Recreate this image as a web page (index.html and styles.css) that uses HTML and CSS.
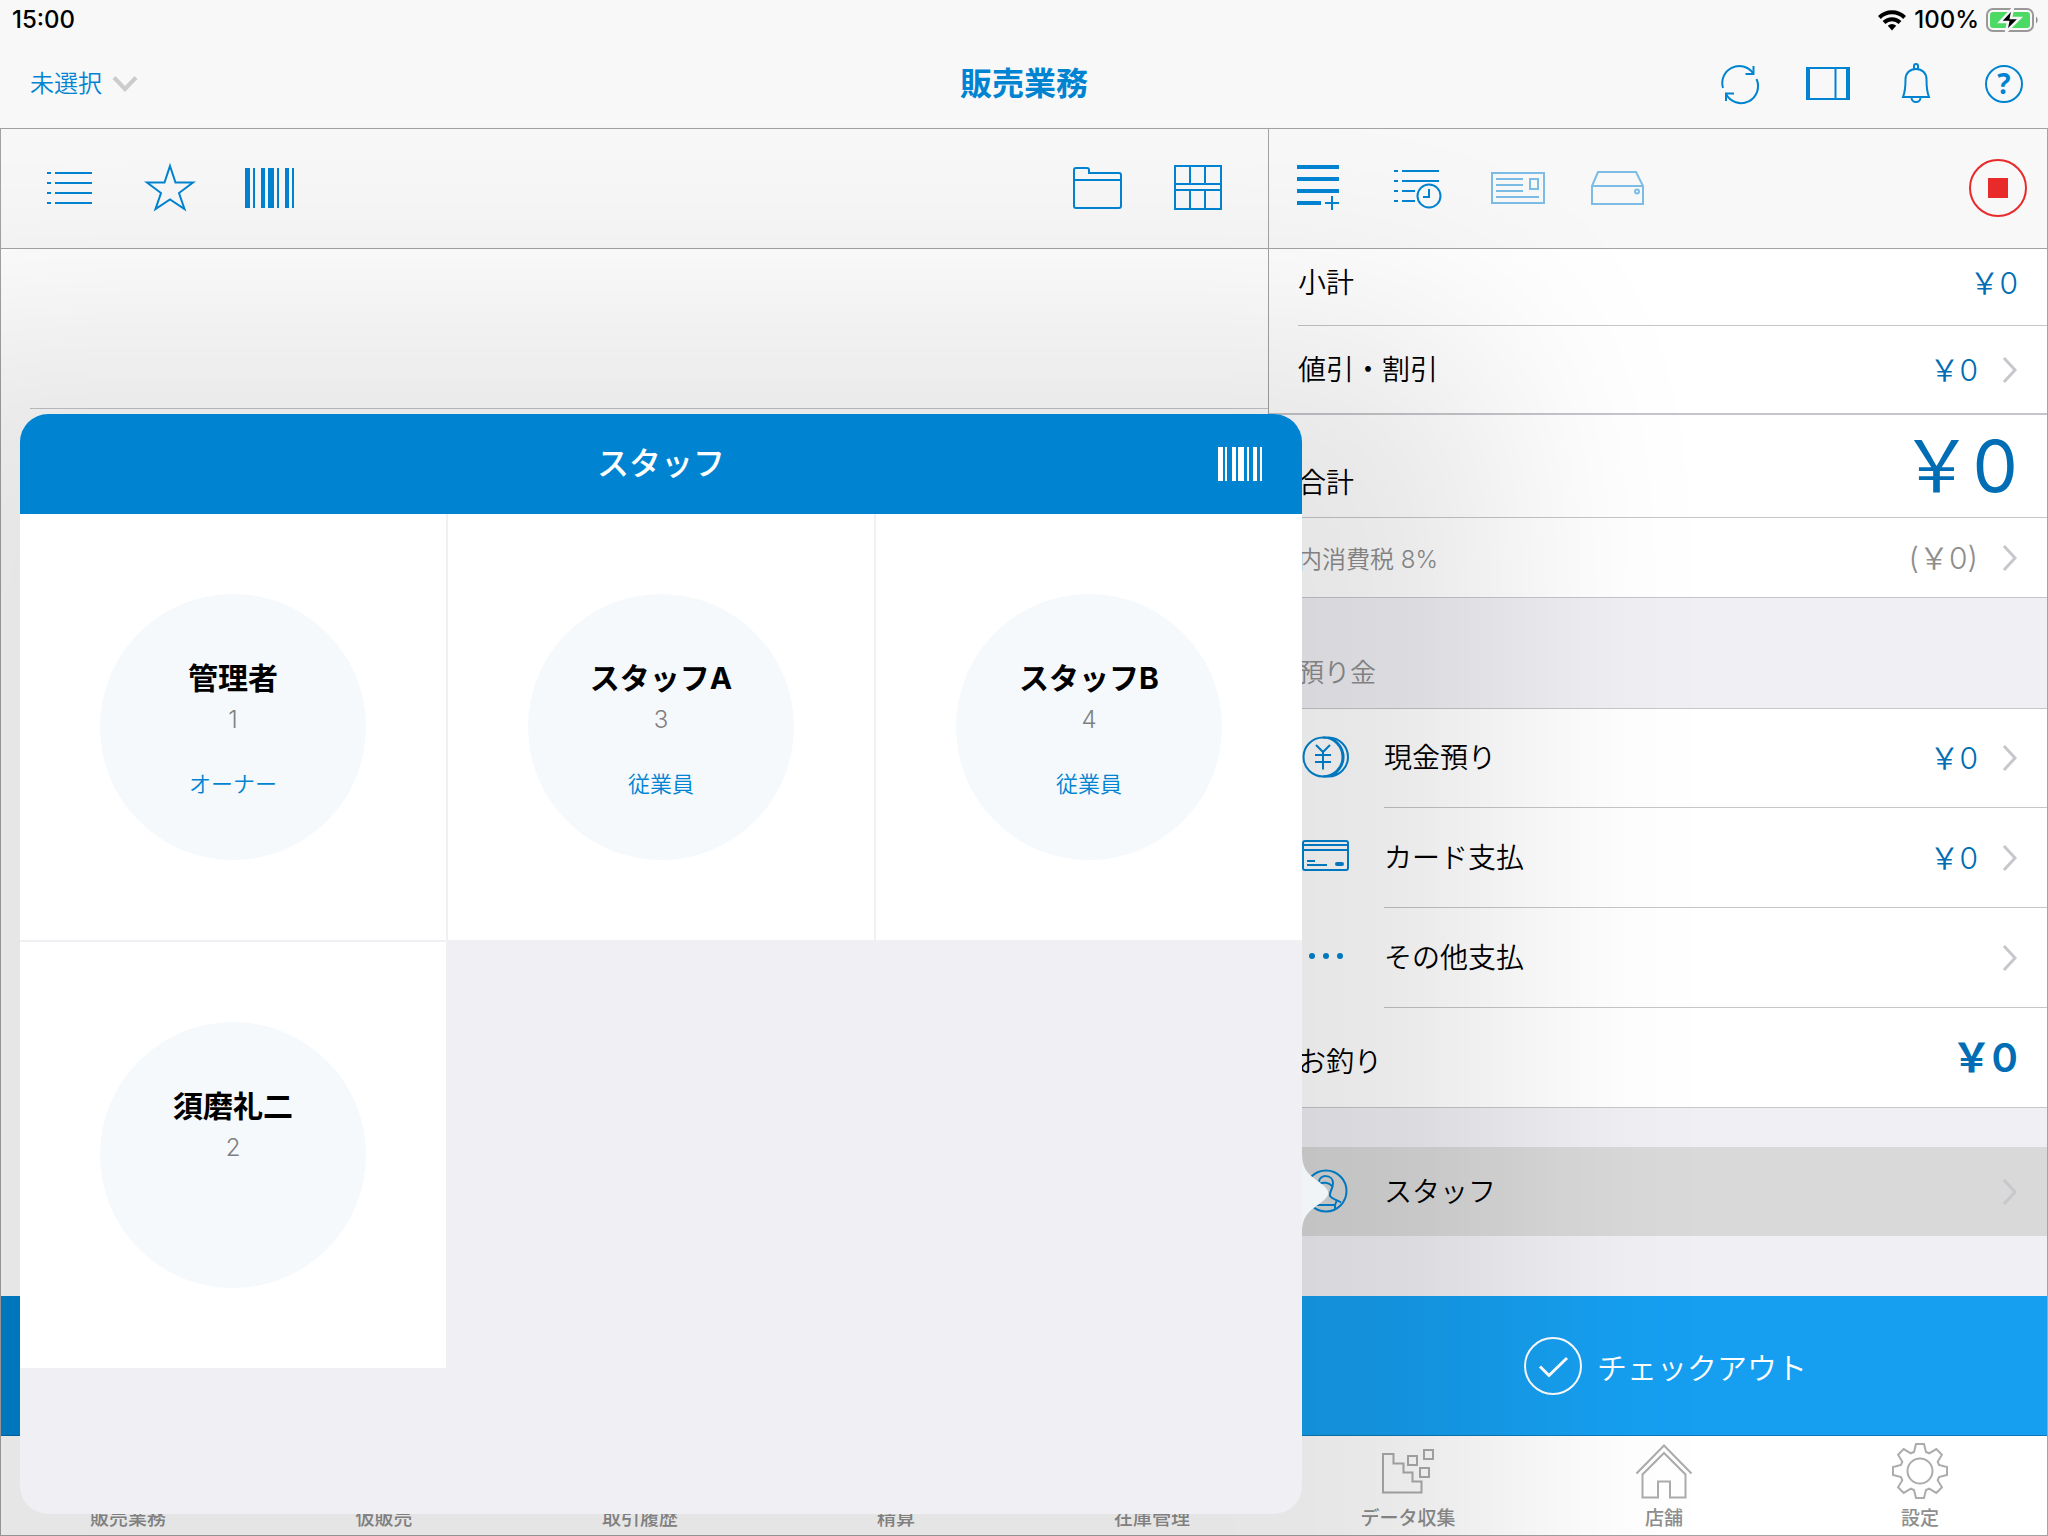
FILE: index.html
```html
<!DOCTYPE html>
<html lang="ja">
<head>
<meta charset="utf-8">
<meta name="viewport" content="width=device-width, initial-scale=1">
<title>販売業務</title>
<link rel="stylesheet" href="styles.css">
</head>
<body>
<div class="app">
  <header class="header">
    <div class="status">
      <span>15:00</span>
      <span class="status-right">
        <svg width="30" height="22" viewBox="0 0 30 22" aria-hidden="true"><g fill="none" stroke="#000" stroke-width="4"><path d="M2.400 8.500A18 18 0 0 1 27.600 8.500"/><path d="M7 13.500A11.500 11.500 0 0 1 23 13.500"/></g><path d="M10.800 16.800A6 6 0 0 1 19.200 16.800L15 21.500Z"/></svg>
        <span>100%</span>
        <svg width="54" height="26" viewBox="0 0 54 26" aria-hidden="true"><rect x="1" y="2" width="46" height="22" rx="6" fill="none" stroke="#999" stroke-width="2"/><rect x="4" y="5" width="40" height="16" rx="3" fill="#4cd964"/><path d="M50 9.500a4.500 4.500 0 0 1 0 7z" fill="#8e8e8e"/><path d="M27 1L14 15h8l-2 10 14-14h-9z" fill="#000" stroke="#f8f8f8" stroke-width="2.500"/></svg>
      </span>
    </div>
    <div class="titlebar">
      <div class="picker">
        <select class="picker-select" aria-label="顧客"><option>未選択</option></select>
        <svg width="26" height="18" viewBox="0 0 26 18" aria-hidden="true"><path d="M2 2.500L13 14L24 2.500" fill="none" stroke="#ccc" stroke-width="4"/></svg>
      </div>
      <h1 class="title">販売業務</h1>
      <div class="actions">
        <button class="action" aria-label="更新"><svg width="48" height="48" viewBox="0 0 48 48"><g class="line"><path d="M7 28A17 17 0 0 1 37 13"/><path d="M37.500 6v8h-8"/><path d="M40.500 19A17 17 0 0 1 10 34"/><path d="M10 41V33.500h8"/></g></svg></button>
        <button class="action" aria-label="表示切替"><svg width="48" height="48" viewBox="0 0 48 48"><path class="line" d="M3 8H45M3 39H45M31.500 8V39"/><path class="line bold" d="M4 7V40M44 7V40"/></svg></button>
        <button class="action" aria-label="通知"><svg width="48" height="48" viewBox="0 0 48 48"><g class="line"><path d="M11 37C13 32 13.500 27 13.500 19.500C13.500 13 18 9 24 9S34.500 13 34.500 19.500C34.500 27 35 32 37 37Z"/><path d="M22 9V6a2 2 0 0 1 4 0V9"/><path d="M19.500 37.500a4.500 4.500 0 0 0 9 0"/></g></svg></button>
        <button class="action" aria-label="ヘルプ"><svg width="48" height="48" viewBox="0 0 48 48"><circle class="line" cx="24" cy="24" r="18"/><text class="help" x="24" y="34" text-anchor="middle">?</text></svg></button>
      </div>
    </div>
  </header>

  <main class="workspace">
    <section class="pane pane-items" aria-label="商品">
      <div class="toolbar toolbar-items">
        <button class="tool" aria-label="リスト"><svg width="60" height="60" viewBox="0 0 60 60"><path class="line" d="M7 15h4M15 15H52M7 25h4M15 25H52M7 35h4M15 35H52M7 45h4M15 45H52"/></svg></button>
        <button class="tool" aria-label="お気に入り"><svg width="60" height="60" viewBox="0 0 60 60"><path class="line" d="M30 8L35.500 24.500L53 24.500L39 35L44.500 51L30 41.500L15.500 51L21 35L7 24.500L24.500 24.500Z"/></svg></button>
        <button class="tool" aria-label="バーコード"><svg width="60" height="60" viewBox="0 0 60 60"><path class="solid" d="M5 10h5v40h-5zM13 10h2v40h-2zM21 10h4v40h-4zM28 10h6v40h-6zM37 10h2v40h-2zM45 10h4v40h-4zM52 10h2v40h-2z"/></svg></button>
        <span class="spacer"></span>
        <button class="tool" aria-label="フォルダ"><svg width="60" height="60" viewBox="0 0 60 60"><path class="line" d="M6 12a2 2 0 0 1 2-2H19a2 2 0 0 1 2 2V15H51a2 2 0 0 1 2 2V48a2 2 0 0 1-2 2H8a2 2 0 0 1-2-2ZM6 22H53"/></svg></button>
        <button class="tool" aria-label="グリッド"><svg width="60" height="60" viewBox="0 0 60 60"><path class="line" d="M7 8H53V51H7ZM7 26H53M7 32H53M22 8V26M37 8V26M22 32V51M37 32V51"/></svg></button>
      </div>
      <div class="items"><div class="items-row"></div></div>
      <div class="items-bar"></div>
    </section>

    <section class="pane pane-cart" aria-label="会計">
      <div class="toolbar">
        <button class="tool" aria-label="明細追加"><svg width="60" height="60" viewBox="0 0 60 60"><path class="solid" d="M8 7h42v4H8zM8 19h42v4H8zM8 31h42v4H8zM8 43h24v4H8z"/><path class="line" d="M36 45H50M43 38V52"/></svg></button>
        <button class="tool" aria-label="履歴"><svg width="60" height="60" viewBox="0 0 60 60"><path class="line" d="M5 13h4M13 13H50M5 23h4M13 23H50M5 33h4M13 33H26M5 43h4M13 43H26"/><circle class="line" cx="40" cy="38" r="11.500"/><path class="line" d="M40 31V39H34"/></svg></button>
        <button class="tool faded" aria-label="会員カード"><svg width="60" height="60" viewBox="0 0 60 60"><path class="line" d="M3 15H55V45H3ZM7 21H34M7 27H34M7 33H34M7 39H50M41 21h8v10h-8z"/></svg></button>
        <button class="tool faded" aria-label="ドロア"><svg width="60" height="60" viewBox="0 0 60 60"><path class="line" d="M3 28L9 14H47L54 28V46H3ZM3 28H54"/><circle class="line" cx="48" cy="33.500" r="2"/></svg></button>
        <span class="spacer"></span>
        <button class="tool" aria-label="停止"><svg width="60" height="60" viewBox="0 0 60 60"><circle cx="31" cy="30" r="28" fill="none" stroke="#e82a2a" stroke-width="2"/><rect x="21" y="20" width="20" height="20" fill="#e82a2a"/></svg></button>
      </div>

      <div class="row row-subtotal"><div class="row-body"><span class="label">小計</span><span class="amount">￥0</span></div></div>
      <button class="row row-discount"><span class="row-body"><span class="label">値引・割引</span><span class="amount">￥0</span><svg class="chevron" width="16" height="26" viewBox="0 0 16 26"><path d="M2 1L13 13L2 25"/></svg></span></button>
      <div class="row row-total"><div class="row-body"><span class="label">合計</span><span class="amount amount-total">￥0</span></div></div>
      <button class="row row-tax"><span class="row-body"><span class="label small muted">内消費税 8%</span><span class="amount muted">(￥0)</span><svg class="chevron" width="16" height="26" viewBox="0 0 16 26"><path d="M2 1L13 13L2 25"/></svg></span></button>
      <h2 class="section-title">預り金</h2>
      <button class="row row-pay"><svg class="row-icon" width="48" height="48" viewBox="0 0 48 48"><g class="line"><circle cx="21" cy="22" r="19.500"/><path d="M21 2.500H26.500A19.500 19.500 0 0 1 26.500 41.500H21M26 2.500A20 20 0 0 1 26 41.500"/><path d="M14 10L21 17L28 10M21 17V34.500M13 20H29M13 27H29"/></g></svg><span class="row-body"><span class="label">現金預り</span><span class="amount">￥0</span><svg class="chevron" width="16" height="26" viewBox="0 0 16 26"><path d="M2 1L13 13L2 25"/></svg></span></button>
      <button class="row row-pay"><svg class="row-icon" width="48" height="48" viewBox="0 0 48 48"><rect class="line" x="1" y="7" width="45" height="29" rx="2"/><path class="line" d="M1 11H46M1 16H46M5 27H13M5 31H25"/><rect class="solid" x="33" y="28" width="9" height="4" rx="2"/></svg><span class="row-body"><span class="label">カード支払</span><span class="amount">￥0</span><svg class="chevron" width="16" height="26" viewBox="0 0 16 26"><path d="M2 1L13 13L2 25"/></svg></span></button>
      <button class="row row-pay"><svg class="row-icon" width="48" height="48" viewBox="0 0 48 48"><g class="solid"><circle cx="10" cy="22" r="3"/><circle cx="24" cy="22" r="3"/><circle cx="38" cy="22" r="3"/></g></svg><span class="row-body"><span class="label">その他支払</span><svg class="chevron" width="16" height="26" viewBox="0 0 16 26"><path d="M2 1L13 13L2 25"/></svg></span></button>
      <div class="row row-change"><div class="row-body"><span class="label">お釣り</span><span class="amount amount-change">￥0</span></div></div>
      <button class="row row-staff"><svg class="row-icon" width="48" height="48" viewBox="0 0 48 48"><g class="line"><circle cx="24" cy="23" r="20.500"/><path d="M17 14C17 6 31 6 31 15C31 22 27 23 28 28C30 31 35 32 39 34.500M17 16C21 14 27 14 30 18M17 16C16 22 20 25 19 29C17 32 13 33 9 34.500"/><path d="M13 37H33M33 37L35 32M33 37V41"/></g></svg><span class="row-body"><span class="label">スタッフ</span><svg class="chevron" width="16" height="26" viewBox="0 0 16 26"><path d="M2 1L13 13L2 25"/></svg></span></button>
      <button class="checkout"><svg width="60" height="60" viewBox="0 0 60 60"><g fill="none" stroke="#fff"><circle cx="30" cy="30" r="28" stroke-width="2"/><path d="M17 30.500L26 39.500L44 22" stroke-width="3"/></g></svg>チェックアウト</button>
    </section>
  </main>

  <nav class="tabs">
    <a class="tab" href="#sales"><span class="tab-icon"></span>販売業務</a>
    <a class="tab" href="#draft"><span class="tab-icon"></span>仮販売</a>
    <a class="tab" href="#history"><span class="tab-icon"></span>取引履歴</a>
    <a class="tab" href="#settlement"><span class="tab-icon"></span>精算</a>
    <a class="tab" href="#stock"><span class="tab-icon"></span>在庫管理</a>
    <a class="tab" href="#data"><svg class="tab-icon" viewBox="0 0 60 60"><path d="M5 13h10.500v9.500h10v9h9v9h9v11h-38.500zM30 15h9v9h-9zM46 9h9v9h-9zM42 27h9v9h-9z"/></svg>データ収集</a>
    <a class="tab" href="#store"><svg class="tab-icon" viewBox="0 0 60 60"><path d="M2.500 32.500L30 4.500L57.500 32.500M8.500 56.500V33.500L30 12L51.500 33.500V56.500H36V40.500H24V56.500Z"/></svg>店舗</a>
    <a class="tab" href="#settings"><svg class="tab-icon" viewBox="-30 -30 60 60"><path d="M-6-19L-4-27L4-27L6-19L9.200-17.700L16.300-21.900L21.900-16.300L17.700-9.200L19-6L27-4L27 4L19 6L17.700 9.200L21.900 16.300L16.300 21.900L9.200 17.700L6 19L4 27L-4 27L-6 19L-9.200 17.700L-16.300 21.900L-21.900 16.300L-17.700 9.200L-19 6L-27 4L-27-4L-19-6L-17.700-9.200L-21.900-16.300L-16.300-21.900L-9.200-17.700Z"/><circle r="12.500"/></svg>設定</a>
  </nav>

  <div class="popover" role="dialog" aria-label="スタッフ">
    <svg class="popover-arrow" width="28" height="80" viewBox="0 0 28 80" aria-hidden="true"><path d="M0 0C0 20 10 23 21 32C28 38 28 42 21 48C10 57 0 60 0 80Z" fill="#f1f4f7"/></svg>
    <div class="popover-head">
      <h2 class="popover-title">スタッフ</h2>
      <button class="popover-scan" aria-label="バーコード"><svg width="44" height="34" viewBox="0 0 44 34"><path fill="#fff" d="M0 0h5v34H0zM7 0h2v34H7zM14 0h4v34h-4zM20 0h6v34h-6zM29 0h2v34h-2zM35 0h4v34h-4zM42 0h2v34h-2z"/></svg></button>
    </div>
    <div class="staff-grid">
      <button class="staff"><span class="avatar"><span class="name">管理者</span><span class="number">1</span><span class="role">オーナー</span></span></button>
      <button class="staff"><span class="avatar"><span class="name">スタッフA</span><span class="number">3</span><span class="role">従業員</span></span></button>
      <button class="staff"><span class="avatar"><span class="name">スタッフB</span><span class="number">4</span><span class="role">従業員</span></span></button>
      <button class="staff"><span class="avatar"><span class="name">須磨礼二</span><span class="number">2</span></span></button>
    </div>
  </div>
</div>
</body>
</html>
```
FILE: styles.css
```css
:root {
  --blue: #0084d2;
  --amount: #006db4;
  --frame: #a3a3a3;
  --rule: #c6c6ca;
  --muted: #8e8e8e;
  --ground: #efeff4;
}

* { box-sizing: border-box; }

body {
  margin: 0;
  color: #000;
  font-family: "Inter", "Noto Sans CJK JP", sans-serif;
  font-size: 28px;
  font-weight: 350;
}

h1, h2 { margin: 0; }

button {
  margin: 0;
  padding: 0;
  border: 0;
  background: none;
  color: inherit;
  font: inherit;
  text-align: left;
  cursor: pointer;
}

svg { display: block; flex: none; }

.line { fill: none; stroke: var(--blue); stroke-width: 2; }
.line.bold { stroke-width: 4; }
.solid { fill: var(--blue); }
.spacer { flex: 1; }

.app {
  position: relative;
  display: flex;
  flex-direction: column;
  min-height: 100vh;
  overflow: hidden;
}

/* Header */
.header { background: #f8f8f8; }

.status {
  display: flex;
  justify-content: space-between;
  height: 40px;
  padding: 0 8px 0 12px;
  font-size: 24px;
  font-weight: 500;
  line-height: 40px;
}

.status-right { display: flex; align-items: center; gap: 7px; }

.titlebar {
  display: grid;
  grid-template-columns: 1fr auto 1fr;
  align-items: center;
  height: 88px;
}

.picker { display: flex; align-items: center; gap: 10px; padding-left: 30px; }

.picker-select {
  appearance: none;
  padding: 0;
  border: 0;
  background: none;
  color: var(--blue);
  font: inherit;
  font-size: 24px;
  line-height: 40px;
}

.title { color: var(--blue); font-size: 32px; font-weight: 700; line-height: 48px; }

.actions { display: flex; justify-content: flex-end; }
.action { display: flex; justify-content: center; width: 88px; }
.help { fill: var(--blue); font-family: "Open Sans", sans-serif; font-size: 28px; font-weight: 700; }

/* Workspace */
.workspace { display: grid; flex: 1; grid-template-columns: 1269fr 779fr; }

.pane {
  display: flex;
  flex-direction: column;
  min-width: 0;
  border-top: 1px solid var(--frame);
  border-right: 1px solid var(--frame);
}

.pane-items { border-left: 1px solid var(--frame); background: #fff; }
.pane-cart { background: var(--ground); }

.toolbar {
  display: flex;
  align-items: flex-start;
  height: 120px;
  padding-top: 29px;
  border-bottom: 1px solid var(--frame);
  background: #f8f8f8;
}

.toolbar-items { padding-right: 20px; padding-left: 19px; }
.tool { display: flex; justify-content: center; width: 100px; }
.faded { opacity: 0.5; }

.items { flex: 1; }
.items-row { height: 160px; margin-left: 29px; border-bottom: 1px solid var(--rule); }
.items-bar { height: 140px; border-bottom: 1px solid #006aa8; background: var(--blue); }

/* Cart rows */
.row { display: flex; width: 100%; background: #fff; }

.row-body {
  display: flex;
  flex: 1;
  align-items: center;
  gap: 24px;
  padding-right: 29px;
  border-bottom: 1px solid var(--rule);
}

.label { flex: 1; line-height: 40px; }
.small { font-size: 24px; }
.amount { color: var(--amount); font-size: 30px; font-weight: 350; line-height: 40px; }
.muted { color: var(--muted); }
.chevron { fill: none; stroke: #c7c7cc; stroke-width: 3; }
.row-icon { align-self: center; margin-right: 34px; margin-left: 33px; }

.row-subtotal { height: 77px; padding-left: 29px; }
.row-subtotal .row-body { padding-bottom: 8px; }
.row-discount { height: 89px; border-bottom: 2px solid var(--rule); padding-left: 29px; }
.row-discount .row-body { border-bottom: 0; }
.row-total { height: 103px; }
.row-total .row-body { padding-left: 29px; }
.row-total .label { align-self: flex-end; padding-bottom: 14px; }
.amount-total { font-size: 72px; font-weight: 400; line-height: 80px; }
.row-tax { height: 80px; }
.row-tax .row-body { padding-left: 29px; }
.row-tax .label { padding-top: 4px; }
.row-pay { height: 100px; }
.section-title + .row-pay { height: 99px; }
.row-change { height: 100px; }
.row-change .row-body { padding-left: 29px; }
.row-change .label { padding-top: 8px; }
.amount-change { font-size: 40px; font-weight: 600; }

.section-title {
  padding: 55px 0 15px 29px;
  border-bottom: 1px solid var(--rule);
  color: var(--muted);
  font-size: 26px;
  font-weight: 350;
  line-height: 40px;
}

.row-staff { height: 89px; margin-top: 39px; background: #d9d9d9; }
.row-staff .row-body { border-bottom: 0; }

.checkout {
  display: flex;
  align-items: center;
  justify-content: center;
  gap: 14px;
  height: 140px;
  margin-top: auto;
  padding-left: 14px;
  border-bottom: 1px solid #0f77b5;
  background: #169ff0;
  color: #fff;
  font-size: 30px;
}

/* Bottom tabs */
.tabs {
  display: grid;
  grid-template-columns: repeat(8, 1fr);
  height: 100px;
  border-bottom: 1px solid var(--frame);
  background: #fff;
  box-shadow: inset 1px 0 var(--frame), inset -1px 0 var(--frame);
}

.tab {
  display: flex;
  flex-direction: column;
  align-items: center;
  padding-top: 5px;
  color: var(--muted);
  font-size: 19px;
  font-weight: 500;
  line-height: 36px;
  text-decoration: none;
}

.tab-icon { width: 60px; height: 60px; fill: none; stroke: #acacac; stroke-width: 2; }

/* Staff popover */
.popover {
  position: absolute;
  top: 414px;
  bottom: 22px;
  left: 20px;
  width: calc(100% - 766px);
  border-radius: 28px;
  background: var(--ground);
  box-shadow: 0 100px 220px 200px rgba(0, 0, 0, 0.1);
}

.popover-arrow { position: absolute; top: 739px; left: 100%; }

.popover-head {
  display: grid;
  grid-template-columns: 1fr auto 1fr;
  align-items: center;
  height: 100px;
  padding: 0 40px;
  border-radius: 28px 28px 0 0;
  background: var(--blue);
  color: #fff;
}

.popover-title { grid-column: 2; font-size: 32px; font-weight: 500; line-height: 48px; }
.popover-scan { justify-self: end; }

.staff-grid { display: grid; grid-template-columns: repeat(3, 1fr); gap: 2px; }

.staff {
  display: flex;
  align-items: center;
  justify-content: center;
  aspect-ratio: 1;
  background: #fff;
}

.avatar {
  display: flex;
  flex-direction: column;
  align-items: center;
  width: 266px;
  height: 266px;
  padding-top: 60px;
  border-radius: 50%;
  background: #f5f9fc;
}

.name { font-size: 30px; font-weight: 700; line-height: 48px; }
.number { color: #808080; font-size: 24px; line-height: 36px; }
.role { margin-top: 28px; color: var(--blue); font-size: 22px; line-height: 36px; }
```
